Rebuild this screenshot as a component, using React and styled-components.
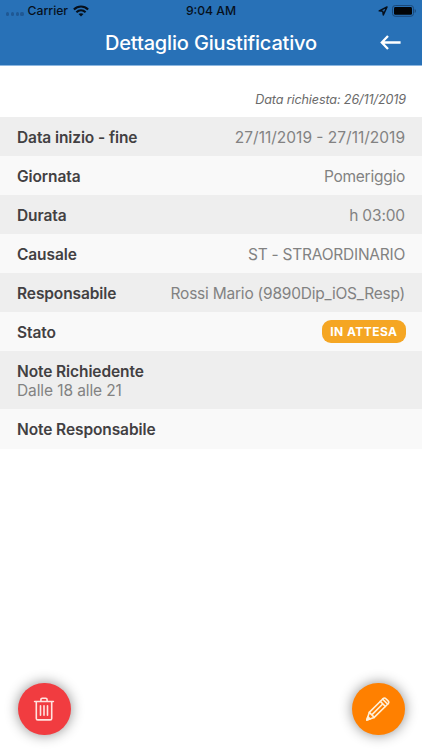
import styled, { createGlobalStyle } from "styled-components"

export default function App() {
    return (
        <>
            <GlobalStyle />
            <Screen>
                <Header>
                    <StatusBar />
                    <TitleBar>
                        <Title>Dettaglio Giustificativo</Title>
                        <BackButton aria-label="Indietro">
                            <svg width="21" height="17" viewBox="0 0 21 17" fill="none" stroke="#fff" strokeWidth="2.3">
                                <path d="M20.6 8.5H2M8 2 1.8 8.5 8 15" />
                            </svg>
                        </BackButton>
                    </TitleBar>
                </Header>
                <RequestDate>Data richiesta: 26/11/2019</RequestDate>
                <Details>
                    {details.map(detail => <DetailRow key={detail.label} {...detail} />)}
                </Details>
                <Actions>
                    <ActionButton $color="#f13c40" aria-label="Elimina"><TrashIcon /></ActionButton>
                    <ActionButton $color="#ff8000" aria-label="Modifica"><PencilIcon /></ActionButton>
                </Actions>
            </Screen>
        </>
    )
}

function StatusBar() {
    return (
        <StatusContainer>
            <StatusLeft>
                <SignalDots><i /><i /><i /><i /></SignalDots>
                <Carrier>Carrier</Carrier>
                <svg width="16" height="12" viewBox="0 0 16 12" fill="none" stroke="#06101c" strokeWidth="2.2">
                    <path d="M.9 4.5C5 .5 11 .5 15.1 4.5" />
                    <path d="M3.4 7.2c2.7-2.4 6.5-2.4 9.2 0" />
                    <path d="M8 11.6 5.5 9.1c1.4-1.3 3.6-1.3 5 0z" fill="#06101c" stroke="none" />
                </svg>
            </StatusLeft>
            <Clock>9:04 AM</Clock>
            <StatusRight>
                <svg width="10" height="10" viewBox="0 0 10 10" fill="none" stroke="#06101c" strokeWidth="1.5" strokeLinejoin="round">
                    <path d="M9 1 1.2 4.8l3.6.5.5 3.6z" />
                </svg>
                <svg width="25" height="12" viewBox="0 0 25 12">
                    <rect x=".5" y=".5" width="21" height="10.8" rx="2.8" fill="none" stroke="#1b4878" />
                    <rect x="2" y="2" width="18" height="7.8" rx="1.4" fill="#020407" />
                    <path d="M22.7 4v4c1.6-.6 1.6-3.4 0-4z" fill="#1b4878" />
                </svg>
            </StatusRight>
        </StatusContainer>
    )
}

function DetailRow({label, value, spacing, note, status}) {
    return (
        <Row>
            <RowLine>
                <Label>{label}</Label>
                {value && <Value $spacing={spacing}>{value}</Value>}
                {status && <Badge>{status}</Badge>}
            </RowLine>
            {note && <Note>{note}</Note>}
        </Row>
    )
}

function TrashIcon() {
    return (
        <svg width="22" height="24" viewBox="0 0 22 24" fill="none" stroke="#ffe3df" strokeWidth="1.6" strokeLinecap="round" strokeLinejoin="round">
            <path d="M1.6 4.5h18.8M3.3 4.5v16.9c0 .9.6 1.5 1.5 1.5h12.4c.9 0 1.5-.6 1.5-1.5V4.5" />
            <path d="M7.9 4.2V2.7c0-.9.5-1.4 1.4-1.4h3.4c.9 0 1.4.5 1.4 1.4v1.5" />
            <path d="M7.5 8.8v9.4M11 8.8v9.4M14.5 8.8v9.4" />
        </svg>
    )
}

function PencilIcon() {
    return (
        <svg width="26" height="26" viewBox="0 0 26 26" fill="none" stroke="#fff0d9" strokeWidth="1.6" strokeLinecap="round" strokeLinejoin="round">
            <path d="m1.8 24 2.5-7.6L18 2.7c1-.9 2-.9 2.9 0l2.2 2.2c.9.9.9 1.9 0 2.9L9.2 21.4z" />
            <path d="m4.3 16.4 5 5M15.3 5.4l5.1 5.1M17.6 3.1l5.1 5.1M6.8 18.9 17.7 8" />
            <path d="m1.8 24 1.1-3.2 2.1 2.1z" fill="#fff0d9" />
        </svg>
    )
}

const details = [
    {label: 'Data inizio - fine', value: '27/11/2019 - 27/11/2019', spacing: '0'},
    {label: 'Giornata', value: 'Pomeriggio', spacing: '-0.25px'},
    {label: 'Durata', value: 'h 03:00', spacing: '-0.15px'},
    {label: 'Causale', value: 'ST - STRAORDINARIO', spacing: '-0.25px'},
    {label: 'Responsabile', value: 'Rossi Mario (9890Dip_iOS_Resp)', spacing: '-0.22px'},
    {label: 'Stato', status: 'IN ATTESA'},
    {label: 'Note Richiedente', note: 'Dalle 18 alle 21'},
    {label: 'Note Responsabile'},
]

const GlobalStyle = createGlobalStyle`
    * {
        box-sizing: border-box;
    }

    body {
        margin: 0;
        background-color: #fff;
        font-family: Inter, "Liberation Sans", sans-serif;
    }

    button {
        border: none;
        padding: 0;
        cursor: pointer;
    }

    svg {
        display: block;
        flex-shrink: 0;
    }
`

const Screen = styled.main`
    width: 100%;
    height: 750px;
    display: flex;
    flex-direction: column;
    overflow: hidden;
`

const Header = styled.header`
    height: 66px;
    flex-shrink: 0;
    background-color: #2871b7;
    border-bottom: 1px solid #8db7e0;
`

const StatusContainer = styled.div`
    height: 21px;
    display: grid;
    grid-template-columns: 1fr auto 1fr;
    align-items: center;
    padding: 0 5px 0 6px;
    color: #06101c;
    font-size: 12.2px;
    font-weight: 500;
    line-height: 21px;
`

const StatusLeft = styled.div`
    display: flex;
    align-items: center;
`

const SignalDots = styled.span`
    display: flex;
    gap: 1.6px;
    padding-top: 7px;

    & i {
        width: 3.2px;
        height: 3.2px;
        border-radius: 50%;
        background-color: #1f5894;
    }
`

const Carrier = styled.span`
    margin: 0 5px 0 4px;
`

const Clock = styled.span`
    margin-right: 1px;
`

const StatusRight = styled.div`
    display: flex;
    justify-content: flex-end;
    align-items: center;
    gap: 4px;
`

const TitleBar = styled.div`
    height: 43px;
    display: grid;
    grid-template-columns: 1fr auto 1fr;
    align-items: center;
    padding: 0 21px;
`

const Title = styled.h1`
    grid-column: 2;
    margin: 0;
    color: #fff;
    font-size: 20px;
    font-weight: 500;
    letter-spacing: -0.17px;
    line-height: 42px;
    white-space: nowrap;
`

const BackButton = styled.button`
    justify-self: end;
    background: none;
`

const RequestDate = styled.p`
    height: 51px;
    flex-shrink: 0;
    margin: 0;
    padding: 25px 16px 0 0;
    text-align: right;
    color: #6a6a6a;
    font-size: 12.6px;
    font-style: italic;
    letter-spacing: -0.12px;
    line-height: 18px;
`

const Details = styled.section`
    display: flex;
    flex-direction: column;
`

const Row = styled.div`
    padding: 11px 17px 9px;
    background-color: #f9f9f9;
    color: #828282;
    font-size: 15.5px;
    line-height: 19px;

    &:nth-child(odd) {
        background-color: #eee;
    }

    &:last-child {
        padding-bottom: 10px;
    }
`

const RowLine = styled.div`
    height: 19px;
    display: flex;
    justify-content: space-between;
    align-items: center;
`

const Label = styled.span`
    color: #424042;
    font-weight: 600;
    letter-spacing: -0.1px;
`

const Value = styled.span`
    letter-spacing: ${props => props.$spacing};
    white-space: nowrap;
`

const Note = styled.p`
    margin: 0;
    letter-spacing: -0.1px;
`

const Badge = styled.span`
    height: 23px;
    padding: 0 8px 0 8.5px;
    margin: -2px -0.5px 0 0;
    border-radius: 9px;
    background-color: #f5a623;
    color: #fff;
    font-size: 12px;
    font-weight: 700;
    letter-spacing: 0.45px;
    line-height: 23px;
`

const Actions = styled.footer`
    display: flex;
    justify-content: space-between;
    margin-top: auto;
    padding: 0 17.5px 15px 18px;
`

const ActionButton = styled.button`
    width: 52.5px;
    height: 52.5px;
    display: flex;
    justify-content: center;
    align-items: center;
    border-radius: 50%;
    background-color: ${props => props.$color};
    box-shadow: 0 0 13px rgba(0, 0, 0, 0.45);
`
